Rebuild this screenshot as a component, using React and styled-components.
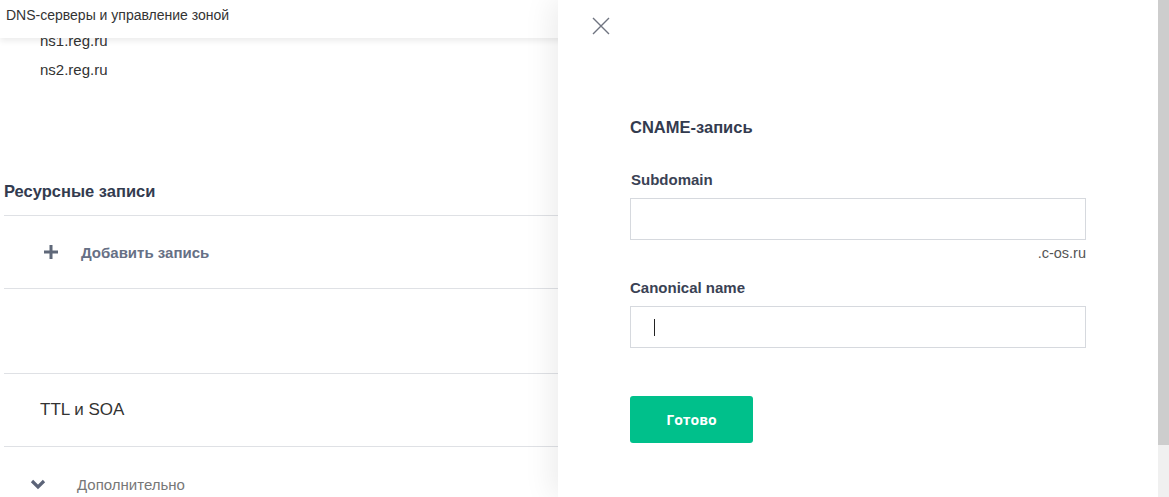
import React from "react";
import styled, { createGlobalStyle } from "styled-components";

const GlobalStyle = createGlobalStyle`
  html, body {
    margin: 0;
    padding: 0;
    background: #fff;
    overflow: hidden;
  }
  body {
    font-family: "Liberation Sans", Arial, sans-serif;
  }
`;

const Screen = styled.div`
  display: flex;
  width: 1169px;
  height: 497px;
  overflow: hidden;
`;

const Viewport = styled.div`
  position: relative;
  flex: 1;
  height: 100%;
  overflow: hidden;
`;

const Scrollbar = styled.div`
  width: 11px;
  display: flex;
  flex-direction: column;
  background: #f0f0f0;
  & > div {
    height: 445px;
    background: #cdcdcd;
  }
`;

const Header = styled.div`
  position: absolute;
  top: 0;
  left: 0;
  right: 0;
  height: 38px;
  background: #fff;
  box-shadow: 0 3px 6px rgba(0, 0, 0, 0.08);
  z-index: 2;
  padding-left: 6px;
  font-size: 14px;
  line-height: 30px;
  color: #333;
`;

const Content = styled.div`
  padding-top: 26px;
`;

const NsList = styled.div`
  padding-left: 40px;
  font-size: 15px;
  color: #333;
  line-height: 29px;
`;

const SectionTitle = styled.h2`
  margin: 97px 0 0 4px;
  font-size: 16.5px;
  font-weight: bold;
  color: #333b4f;
  line-height: 20px;
  padding-bottom: 14px;
  border-bottom: 1px solid #dfe1e5;
`;

const Row = styled.div`
  display: flex;
  align-items: center;
  margin-left: 4px;
  height: ${(p) => p.$h}px;
  border-bottom: ${(p) => (p.$line ? "1px solid #dfe1e5" : "none")};
  padding-left: ${(p) => p.$pad}px;
`;

const AddText = styled.span`
  margin-left: 23px;
  font-size: 15px;
  font-weight: bold;
  color: #667085;
`;

const Spacer = styled.div`
  height: 84px;
  margin-left: 4px;
  border-bottom: 1px solid #dfe1e5;
`;

const TtlText = styled.span`
  font-size: 17px;
  color: #333;
`;

const MoreText = styled.span`
  margin-left: 31px;
  font-size: 15px;
  color: #777;
`;

const Drawer = styled.div`
  position: absolute;
  top: 0;
  bottom: 0;
  left: 558px;
  right: 0;
  background: #fff;
  z-index: 3;
  box-shadow: -6px 0 28px rgba(0, 0, 0, 0.08);
  display: flex;
  flex-direction: column;
`;

const Close = styled.button`
  margin: 17px 0 0 34px;
  width: 18px;
  height: 18px;
  padding: 0;
  border: 0;
  background: none;
  display: flex;
`;

const Form = styled.div`
  padding: 82px 0 0 72px;
  width: 456px;
  display: flex;
  flex-direction: column;
`;

const FormTitle = styled.h3`
  margin: 0 0 34px;
  font-size: 16.5px;
  font-weight: bold;
  color: #333b4f;
  line-height: 20px;
`;

const Label = styled.label`
  font-size: 15px;
  font-weight: bold;
  color: #3a4254;
  line-height: 18px;
  margin-left: ${(p) => p.$off || 0}px;
  margin-bottom: 9px;
`;

const Input = styled.div`
  box-sizing: border-box;
  height: 42px;
  border: 1px solid #d6d9de;
  display: flex;
  align-items: center;
  padding-left: 23px;
`;

const Caret = styled.span`
  width: 1px;
  height: 17px;
  background: #222;
`;

const Hint = styled.div`
  align-self: flex-end;
  font-size: 14.5px;
  color: #555;
  line-height: 16px;
  margin: 5px 0 18px;
`;

const Button = styled.button`
  margin-top: 48px;
  width: 123px;
  height: 47px;
  border: 0;
  border-radius: 3px;
  background: #00c08b;
  color: #fff;
  font-family: "Open Sans", "Liberation Sans", sans-serif;
  font-size: 14px;
  font-weight: bold;
`;

export default function App() {
  return (
    <>
      <GlobalStyle />
      <Screen>
        <Viewport>
          <Header>DNS-серверы и управление зоной</Header>
          <Content>
            <NsList>
              <div>ns1.reg.ru</div>
              <div>ns2.reg.ru</div>
            </NsList>
            <SectionTitle>Ресурсные записи</SectionTitle>
            <Row $h={72} $line $pad={40}>
              <svg width="14" height="14" viewBox="0 0 14 14">
                <path d="M7 0v14M0 7h14" stroke="#5f6879" strokeWidth="3" />
              </svg>
              <AddText>Добавить запись</AddText>
            </Row>
            <Spacer />
            <Row $h={72} $line $pad={36}>
              <TtlText>TTL и SOA</TtlText>
            </Row>
            <Row $h={74} $pad={26}>
              <svg width="16" height="11" viewBox="0 0 16 11">
                <path d="M2 2l6 6 6-6" fill="none" stroke="#5c6478" strokeWidth="3.2" />
              </svg>
              <MoreText>Дополнительно</MoreText>
            </Row>
          </Content>
          <Drawer>
            <Close>
              <svg width="18" height="18" viewBox="0 0 18 18">
                <path d="M1 1l16 16M17 1L1 17" stroke="#6f7480" strokeWidth="1.4" />
              </svg>
            </Close>
            <Form>
              <FormTitle>CNAME-запись</FormTitle>
              <Label $off={1}>Subdomain</Label>
              <Input />
              <Hint>.c-os.ru</Hint>
              <Label>Canonical name</Label>
              <Input>
                <Caret />
              </Input>
              <Button>Готово</Button>
            </Form>
          </Drawer>
        </Viewport>
        <Scrollbar>
          <div />
        </Scrollbar>
      </Screen>
    </>
  );
}
